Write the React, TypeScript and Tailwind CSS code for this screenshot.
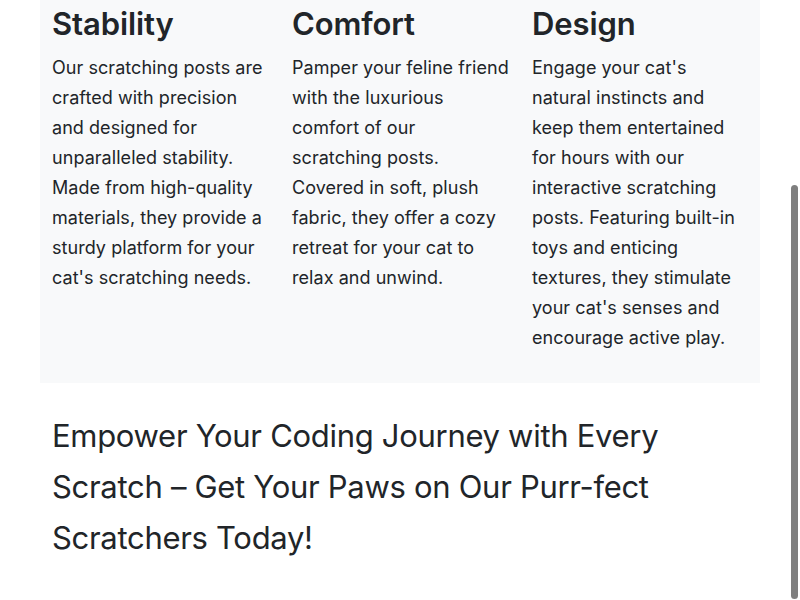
const features = [
  {
    title: "Stability",
    lines: [
      "Our scratching posts are",
      "crafted with precision",
      "and designed for",
      "unparalleled stability.",
      "Made from high-quality",
      "materials, they provide a",
      "sturdy platform for your",
      "cat's scratching needs.",
    ],
  },
  {
    title: "Comfort",
    lines: [
      "Pamper your feline friend",
      "with the luxurious",
      "comfort of our",
      "scratching posts.",
      "Covered in soft, plush",
      "fabric, they offer a cozy",
      "retreat for your cat to",
      "relax and unwind.",
    ],
  },
  {
    title: "Design",
    lines: [
      "Engage your cat's",
      "natural instincts and",
      "keep them entertained",
      "for hours with our",
      "interactive scratching",
      "posts. Featuring built-in",
      "toys and enticing",
      "textures, they stimulate",
      "your cat's senses and",
      "encourage active play.",
    ],
  },
];

export default function App() {
  return (
    <div
      className="relative min-h-screen bg-white text-[#212529]"
      style={{ fontFamily: "Inter, 'Noto Sans', sans-serif" }}
    >
      <div className="mx-auto w-[720px]">
        {/* Features */}
        <section className="grid grid-cols-3 bg-[#f8f9fa] pt-[5px] pb-[30px]">
          {features.map((f) => (
            <div key={f.title} className="px-3">
              <h3 className="mb-[10px] text-[31px] font-semibold leading-[38px] tracking-[-0.1px]">
                {f.title}
              </h3>
              <p className="text-[18px] leading-[30px] tracking-[0.05px] whitespace-nowrap">
                {f.lines.map((l) => (
                  <span key={l} className="block">
                    {l}
                  </span>
                ))}
              </p>
            </div>
          ))}
        </section>

        {/* Tagline */}
        <h2 className="px-3 pt-[27px] text-[31px] leading-[51px] tracking-[-0.3px]">
          Empower Your Coding Journey with Every
          <br />
          Scratch – Get Your Paws on Our Purr-fect
          <br />
          Scratchers Today!
        </h2>
      </div>

      {/* overlay scrollbar */}
      <div className="absolute right-[2px] top-[185px] h-[414px] w-[7px] rounded-full bg-[#7f7f7f]" />
    </div>
  );
}
